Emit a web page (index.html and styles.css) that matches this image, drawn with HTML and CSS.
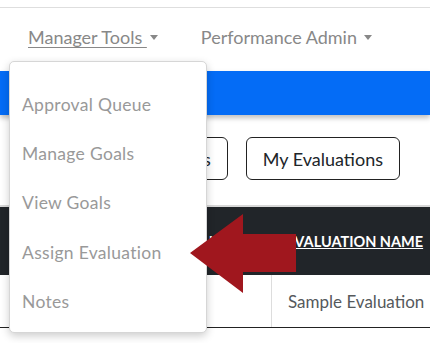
FILE: index.html
```html
<!DOCTYPE html>
<html>
<head>
<meta charset="utf-8">
<link rel="stylesheet" href="styles.css">
</head>
<body>
<div class="page">
  <div class="topline"></div>
  <nav class="nav">
    <a class="nav-item active"><span class="nav-label">Manager Tools&nbsp;</span><span class="caret"></span></a>
    <a class="nav-item"><span>Performance Admin</span><span class="caret"></span></a>
  </nav>
  <div class="banner"></div>
  <div class="actions">
    <button class="btn">Evaluations</button>
    <button class="btn">My Evaluations</button>
  </div>
  <div class="table">
    <div class="th first">NAME</div>
    <div class="th">EVALUATION NAME</div>
    <div class="td first"></div>
    <div class="td">Sample Evaluation</div>
  </div>

  <ul class="dropdown">
    <li>Approval Queue</li>
    <li>Manage Goals</li>
    <li>View Goals</li>
    <li>Assign Evaluation</li>
    <li>Notes</li>
  </ul>

  <svg class="arrow" width="106" height="79" viewBox="0 0 106 79">
    <polygon points="0,39 53,0 53,20 106,20 106,58 53,58 53,79" fill="#a0171e"/>
  </svg>
</div>
</body>
</html>
```
FILE: styles.css
```css
* { box-sizing: border-box; }
html, body { margin: 0; padding: 0; background: #fff; }
body { font-family: Lato, "Liberation Sans", sans-serif; width: 430px; height: 343px; overflow: hidden; }
.page { position: relative; width: 430px; height: 343px; overflow: hidden; }
.topline { height: 8px; border-bottom: 1px solid #dedede; }
.nav { display: flex; align-items: center; height: 60px; padding-left: 28px; padding-bottom: 2px; gap: 43px; }
.nav-item { display: flex; align-items: center; color: #888; font-size: 18px; }
.nav-item .nav-label { text-decoration: underline; text-underline-offset: 3px; text-decoration-thickness: 1px; }
.nav-item span + .caret { margin-left: 7px; }
.nav-item .nav-label + .caret { margin-left: 3px; }
.caret { display: inline-block; width: 0; height: 0; border-left: 4.5px solid transparent; border-right: 4.5px solid transparent; border-top: 5px solid #888; }
.banner { height: 44px; margin-top: 3px; background: #046cf6; box-shadow: 0 3px 5px rgba(0,0,0,0.25); }
.actions { display: flex; justify-content: flex-end; gap: 18px; padding-right: 30px; margin-top: 22px; }
.btn { height: 43px; padding: 0 16px; font-family: inherit; font-size: 18px; color: #212529; background: #fff; border: 1px solid #222; border-radius: 6px; }
.table { display: grid; grid-template-columns: 272px 158px; margin-top: 25px; border-top: 2px solid #d8d8d8; border-bottom: 1px solid #222; }
.th { height: 68px; background: #212529; color: #fff; font-weight: 700; font-size: 14.5px; text-decoration: underline; display: flex; align-items: center; padding-left: 14px; white-space: nowrap; }
.th.first { justify-content: flex-end; padding-right: 20px; padding-left: 0; }
.td { height: 52px; display: flex; align-items: center; padding-left: 16px; font-size: 17px; color: #55595c; white-space: nowrap; }
.td.first { border-right: 1px solid #ddd; }
.dropdown { position: absolute; left: 9px; top: 61px; width: 198px; height: 272px; margin: 0; padding: 18px 0 0; list-style: none; background: #fff; border: 1px solid #d6d6d6; border-radius: 5px; box-shadow: 0 3px 8px rgba(0,0,0,0.2); }
.dropdown li { height: 49.2px; display: flex; align-items: center; padding-left: 12px; font-size: 17.5px; letter-spacing: 0.3px; color: #999; }
.arrow { position: absolute; left: 190px; top: 214px; }
```
